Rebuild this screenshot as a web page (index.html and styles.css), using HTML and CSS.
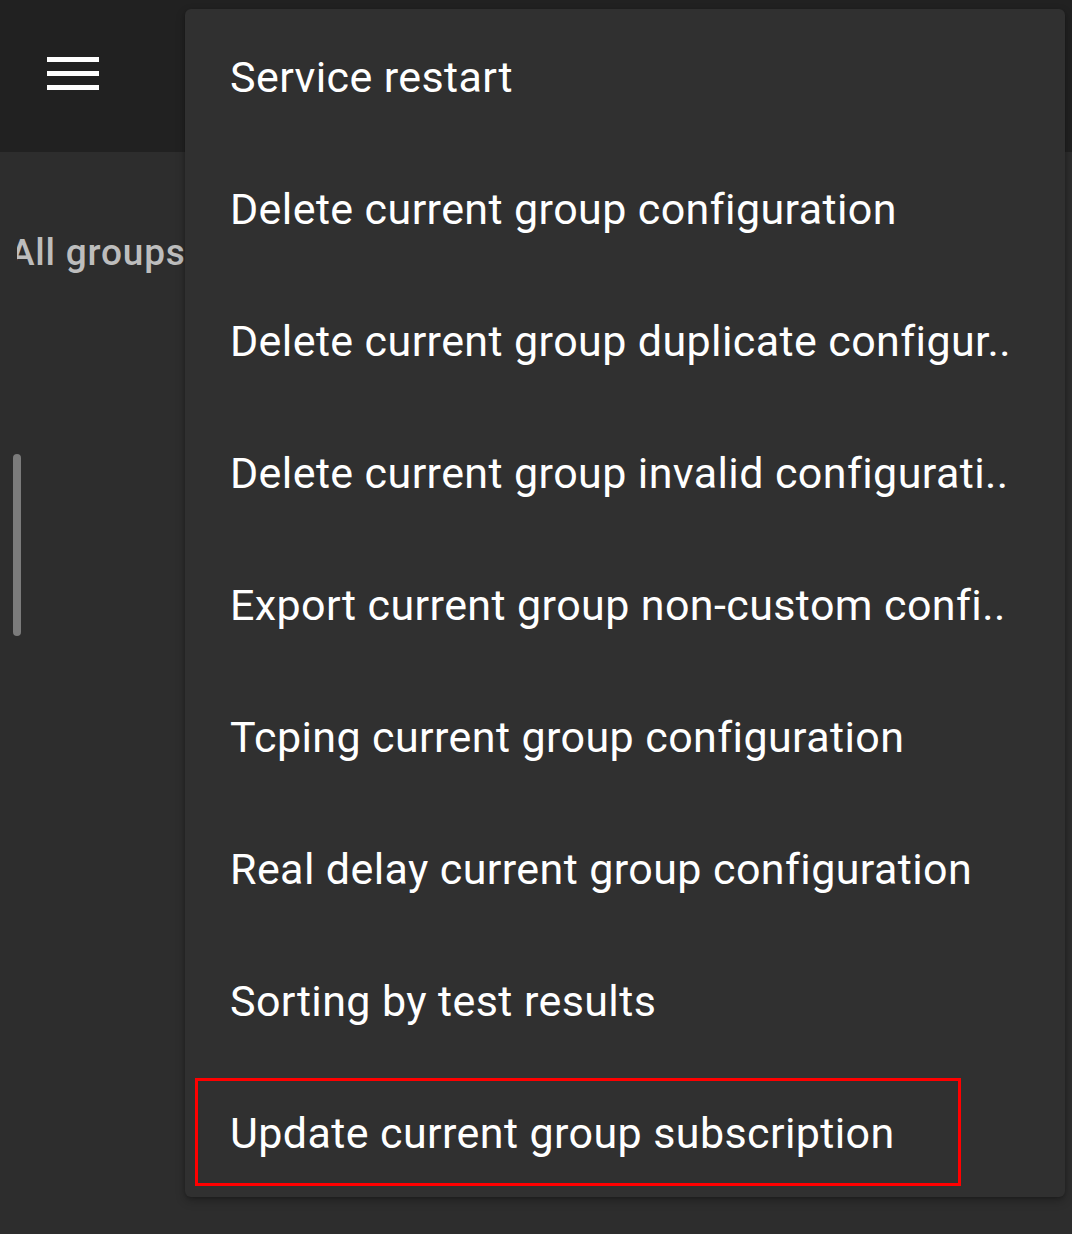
FILE: index.html
```html
<!DOCTYPE html>
<html lang="en">
<head>
<meta charset="utf-8">
<link rel="stylesheet" href="styles.css">
</head>
<body>
<div class="app">
  <header class="appbar">
    <div class="hamburger"><span></span><span></span><span></span></div>
  </header>
  <main class="content">
    <div class="tabs"><span class="tab">All groups</span></div>
    <div class="scrollbar"></div>
  </main>
  <div class="menu">
    <div class="item">Service restart</div>
    <div class="item">Delete current group configuration</div>
    <div class="item">Delete current group duplicate configur..</div>
    <div class="item">Delete current group invalid configurati..</div>
    <div class="item">Export current group non-custom confi..</div>
    <div class="item">Tcping current group configuration</div>
    <div class="item">Real delay current group configuration</div>
    <div class="item">Sorting by test results</div>
    <div class="item highlighted">Update current group subscription</div>
  </div>
</div>
</body>
</html>
```

FILE: styles.css
```css
html, body {
  margin: 0;
  padding: 0;
}
body {
  background: #2d2d2d;
  font-family: Roboto, "Noto Sans", sans-serif;
  width: 1072px;
  height: 1234px;
  overflow: hidden;
}
.app {
  position: relative;
  width: 1072px;
  height: 1234px;
}
.appbar {
  height: 152px;
  background: #212121;
  display: flex;
  align-items: center;
  padding-left: 47px;
  box-sizing: border-box;
}
.hamburger {
  display: flex;
  flex-direction: column;
  gap: 9px;
  width: 52px;
  margin-top: -6px;
}
.hamburger span {
  display: block;
  height: 5px;
  background: #ffffff;
}
.content {
  position: relative;
  height: 1082px;
}
.tabs {
  margin-left: 17px;
  padding-top: 75px;
  width: 200px;
  overflow: hidden;
  white-space: nowrap;
}
.tab {
  display: inline-block;
  margin-left: -7px;
  font-size: 37px;
  font-weight: 500;
  letter-spacing: 0.8px;
  color: #bdbdbd;
  line-height: 52px;
}
.scrollbar {
  margin: 175px 0 0 13px;
  width: 8px;
  height: 182px;
  border-radius: 4px;
  background: #7b7b7b;
}
.menu {
  position: absolute;
  left: 185px;
  top: 9px;
  width: 880px;
  height: 1188px;
  background: #303030;
  border-radius: 6px;
  box-shadow: 0 4px 10px rgba(0,0,0,0.25), 0 1px 3px rgba(0,0,0,0.2);
  display: flex;
  flex-direction: column;
}
.item {
  height: 132px;
  flex: none;
  display: flex;
  align-items: center;
  padding-left: 45px;
  padding-top: 3px;
  font-size: 43px;
  letter-spacing: 0.4px;
  color: #ffffff;
  white-space: nowrap;
  box-sizing: border-box;
}
.highlighted {
  position: relative;
}
.highlighted::after {
  content: "";
  position: absolute;
  left: 10px;
  top: 13px;
  width: 766px;
  height: 108px;
  border: 3px solid #ff0000;
  box-sizing: border-box;
}
```
